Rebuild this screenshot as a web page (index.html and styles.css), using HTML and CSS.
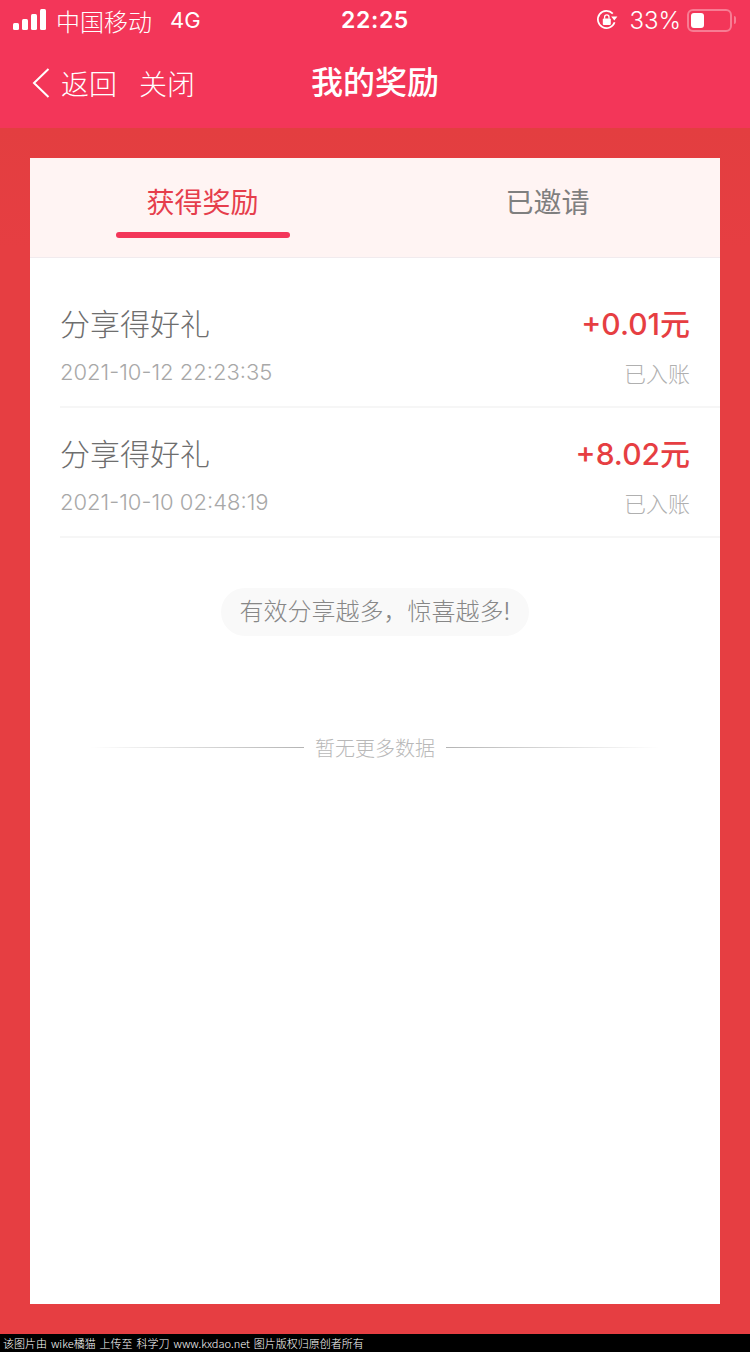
FILE: index.html
```html
<!DOCTYPE html>
<html lang="zh-CN">
<head>
<meta charset="utf-8">
<title>我的奖励</title>
<link rel="stylesheet" href="styles.css">
</head>
<body>
<div class="page">
  <header class="top">
    <div class="status">
      <div class="status-left">
        <svg class="signal" width="34" height="22" viewBox="0 0 34 22"><rect x="0" y="14" width="6" height="7" rx="1.5"/><rect x="9" y="10" width="6" height="11" rx="1.5"/><rect x="18" y="5" width="6" height="16" rx="1.5"/><rect x="27" y="0" width="6" height="21" rx="1.5"/></svg>
        <span class="carrier">中国移动</span>
        <span class="net">4G</span>
      </div>
      <div class="clock">22:25</div>
      <div class="status-right">
        <svg class="lock" width="22" height="22" viewBox="0 0 22 22"><path d="M18.6 13.2A8.6 8.6 0 1 1 16.8 4.6" fill="none" stroke="#fff" stroke-width="1.7"/><path d="M15.2 7.6 21.4 7.6 18.3 11.6Z" fill="#fff"/><rect x="6.8" y="9.6" width="8" height="6.4" rx="1" fill="#fff"/><path d="M8.6 9.8V8a2.2 2.2 0 0 1 4.4 0v1.8" fill="none" stroke="#fff" stroke-width="1.3"/></svg>
        <span class="pct">33%</span>
        <div class="battery"><div class="battery-fill"></div></div>
        <div class="battery-cap"></div>
      </div>
    </div>
    <nav class="nav">
      <div class="nav-left">
        <svg class="back" width="18" height="30" viewBox="0 0 18 30"><path d="M16.5 1 2 15l14.500 14" fill="none" stroke="#fff" stroke-width="2"/></svg>
        <span class="nav-link back-text">返回</span>
        <span class="nav-link">关闭</span>
      </div>
      <h1 class="nav-title">我的奖励</h1>
    </nav>
  </header>
  <main class="stage">
    <section class="card">
      <div class="tabs">
        <div class="tab tab-active"><span>获得奖励</span><i class="tab-bar"></i></div>
        <div class="tab"><span>已邀请</span></div>
      </div>
      <div class="list">
        <div class="row">
          <div class="row-line"><span class="row-title">分享得好礼</span><span class="row-amount">+0.01元</span></div>
          <div class="row-line row-sub"><span class="row-date">2021-10-12 22:23:35</span><span class="row-state">已入账</span></div>
        </div>
        <div class="row">
          <div class="row-line"><span class="row-title">分享得好礼</span><span class="row-amount">+8.02元</span></div>
          <div class="row-line row-sub"><span class="row-date">2021-10-10 02:48:19</span><span class="row-state">已入账</span></div>
        </div>
      </div>
      <div class="hint-wrap"><div class="hint">有效分享越多，惊喜越多!</div></div>
      <div class="end">
        <i class="end-line end-line-l"></i>
        <span class="end-text">暂无更多数据</span>
        <i class="end-line end-line-r"></i>
      </div>
    </section>
  </main>
  <footer class="credit">该图片由 wike橘猫 上传至 科学刀 www.kxdao.net 图片版权归原创者所有</footer>
</div>
</body>
</html>
```
FILE: styles.css
```css
* { box-sizing: border-box; margin: 0; padding: 0; }
html, body { width: 750px; height: 1352px; overflow: hidden; }
body { font-family: "Inter", "Noto Sans CJK SC", sans-serif; background: #e63e42; }
i { display: block; font-style: normal; }
.page { width: 750px; height: 1352px; display: flex; flex-direction: column; }

.top { height: 128px; background: #f33659; color: #fff; flex: none; }
.status { position: relative; height: 40px; display: flex; align-items: center; justify-content: space-between; padding: 0 14px 0 13px; font-size: 24px; }
.status-left { display: flex; align-items: center; }
.signal { fill: #fff; margin-right: 9px; }
.carrier { font-weight: 300; letter-spacing: 0; }
.net { margin-left: 18px; font-weight: 400; font-size: 22px; }
.clock { position: absolute; left: 0; right: 0; text-align: center; font-size: 23px; font-weight: 600; letter-spacing: 0.6px; }
.status-right { display: flex; align-items: center; }
.lock { margin-right: 11px; }
.pct { font-weight: 300; margin-right: 6px; font-size: 24px; }
.battery { width: 45px; height: 23px; border: 2px solid rgba(255,255,255,.35); border-radius: 6px; padding: 2px; }
.battery-fill { width: 13px; height: 100%; background: #fff; border-radius: 3px; }
.battery-cap { width: 2px; height: 8px; margin-left: 2px; background: rgba(255,255,255,.35); border-radius: 0 2px 2px 0; }

.nav { position: relative; height: 88px; display: flex; align-items: center; justify-content: center; padding-bottom: 3px; }
.nav-left { position: absolute; left: 32px; top: 0; bottom: 3px; display: flex; align-items: center; }
.back { margin-right: 11px; }
.nav-link { font-size: 28px; font-weight: 300; }
.back-text { margin-right: 22px; }
.nav-title { font-size: 32px; font-weight: 500; line-height: 44px; }

.stage { flex: 1; min-height: 0; padding: 30px; background: linear-gradient(#e33e40, #e63e42 120px); }
.card { height: 100%; background: #fff; }

.tabs { height: 100px; display: flex; background: #fff4f3; border-bottom: 1px solid #f1ebee; }
.tab { position: relative; width: 345px; display: flex; justify-content: center; padding-top: 25px; font-size: 28px; line-height: 40px; color: #7f7f7f; }
.tab-active { color: #e63e4c; }
.tab-bar { position: absolute; left: 86px; top: 74px; width: 174px; height: 6px; border-radius: 3px; background: #f33659; }

.list { padding-left: 30px; }
.row { height: 130px; padding-right: 30px; border-bottom: 2px solid #f6f6f6; padding-top: 43px; }
.row:first-child { height: 150px; padding-top: 43px; }
.row:nth-child(2) { padding-top: 23px; }
.row-line { display: flex; justify-content: space-between; align-items: center; height: 42px; }
.row-sub { height: 32px; margin-top: 13px; }
.row-title { font-size: 30px; color: #6e6e6e; font-weight: 300; }
.row-amount { font-size: 30px; color: #e63e42; font-weight: 500; }
.row-date { font-size: 22px; color: #a8a8a8; font-weight: 300; }
.row-state { font-size: 22px; color: #b0b0b0; font-weight: 300; }

.hint-wrap { display: flex; justify-content: center; padding-top: 50px; }
.hint { height: 48px; padding: 0 19px; border-radius: 24px; background: #f9f9f9; font-size: 24px; line-height: 48px; color: #878787; font-weight: 300; white-space: nowrap; }

.end { display: flex; align-items: center; justify-content: center; margin-top: 92px; height: 38px; padding: 0 60px; }
.end-line { width: 214px; height: 1px; }
.end-line-l { background: linear-gradient(90deg, rgba(180,180,180,0), #b4b4b4); }
.end-line-r { background: linear-gradient(90deg, #b4b4b4, rgba(180,180,180,0)); }
.end-text { margin: 0 11px; font-size: 20px; color: #b8b8b8; font-weight: 300; white-space: nowrap; }

.credit { height: 18px; flex: none; background: #000; color: #fff; font-family: "Noto Sans CJK SC", "Liberation Sans", sans-serif; font-size: 11px; line-height: 18px; padding-left: 3px; white-space: pre; word-spacing: 1.500px; font-weight: 300; }
```
